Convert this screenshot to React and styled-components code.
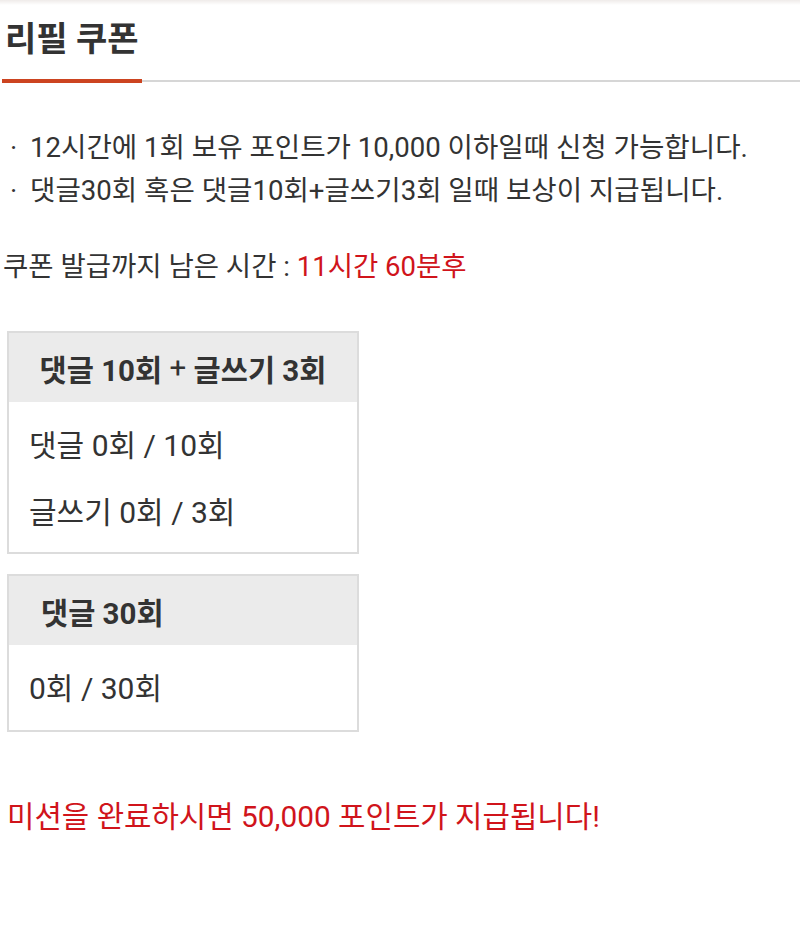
import React from "react";
import styled, { createGlobalStyle } from "styled-components";

const GlobalStyle = createGlobalStyle`
  html, body { margin: 0; padding: 0; background: #ffffff; }
  body {
    font-family: Roboto, "Noto Sans CJK KR", sans-serif;
    color: #333333;
  }
`;

const Page = styled.div`
  width: 800px;
  min-height: 929px;
  background: #fff;
`;

const TopShade = styled.div`
  height: 5px;
  background: linear-gradient(#efebe9, #ffffff);
`;

const Header = styled.div`
  display: flex;
  align-items: flex-end;
  padding-left: 2px;
  margin-top: -5px;
`;

const Tab = styled.h2`
  margin: 0;
  width: 140px;
  padding: 16px 0 17px 3px;
  box-sizing: border-box;
  font-size: 34px;
  line-height: 46px;
  font-weight: 700;
  color: #333;
  white-space: nowrap;
  border-bottom: 4px solid #cc4420;
`;

const Rule = styled.div`
  flex: 1;
  border-bottom: 2px solid #d6d6d6;
  margin-bottom: 1px;
`;

const Notes = styled.ul`
  list-style: none;
  margin: 43px 0 0;
  padding: 0 0 0 10px;
`;

const Note = styled.li`
  font-size: 27.6px;
  line-height: 43px;
  color: #333;
  white-space: nowrap;
`;

const Dot = styled.span`
  display: inline-block;
  width: 20px;
`;

const Timer = styled.p`
  margin: 33px 0 0;
  padding-left: 3px;
  font-size: 27.5px;
  line-height: 43px;
  color: #333;
`;

const Red = styled.span`
  color: #d0141b;
`;

const Box = styled.section`
  width: 352px;
  box-sizing: border-box;
  margin: ${(p) => p.$top}px 0 0 7px;
  border: 2px solid #dcdcdc;
`;

const BoxHead = styled.div`
  height: 69px;
  background: #ebebeb;
  display: flex;
  align-items: center;
  justify-content: ${(p) => (p.$center ? "center" : "flex-start")};
  padding-left: ${(p) => (p.$center ? 0 : 32)}px;
  font-size: 29.5px;
  font-weight: 700;
  color: #333;
  white-space: pre;
`;

const Plus = styled.span`
  font-weight: 400;
`;

const BoxBody = styled.div`
  padding: ${(p) => p.$pt}px 20px ${(p) => p.$pb}px;
`;

const Row = styled.div`
  font-size: 30px;
  line-height: 67px;
  color: #333;
`;

const Reward = styled.p`
  margin: 63px 0 0;
  padding-left: 7px;
  font-size: 29.8px;
  line-height: 43px;
  color: #d0141b;
`;

export default function App() {
  return (
    <Page>
      <GlobalStyle />
      <TopShade />
      <Header>
        <Tab>리필 쿠폰</Tab>
        <Rule />
      </Header>
      <Notes>
        <Note>
          <Dot>·</Dot>12시간에 1회 보유 포인트가 10,000 이하일때 신청 가능합니다.
        </Note>
        <Note>
          <Dot>·</Dot>댓글30회 혹은 댓글10회+글쓰기3회 일때 보상이 지급됩니다.
        </Note>
      </Notes>
      <Timer>
        쿠폰 발급까지 남은 시간 : <Red>11시간 60분후</Red>
      </Timer>
      <Box $top={43}>
        <BoxHead $center>
          댓글 10회 <Plus>+</Plus> 글쓰기 3회
        </BoxHead>
        <BoxBody $pt={10} $pb={6}>
          <Row>댓글 0회 / 10회</Row>
          <Row>글쓰기 0회 / 3회</Row>
        </BoxBody>
      </Box>
      <Box $top={20}>
        <BoxHead>댓글 30회</BoxHead>
        <BoxBody $pt={10} $pb={8}>
          <Row>0회 / 30회</Row>
        </BoxBody>
      </Box>
      <Reward>미션을 완료하시면 50,000 포인트가 지급됩니다!</Reward>
    </Page>
  );
}
